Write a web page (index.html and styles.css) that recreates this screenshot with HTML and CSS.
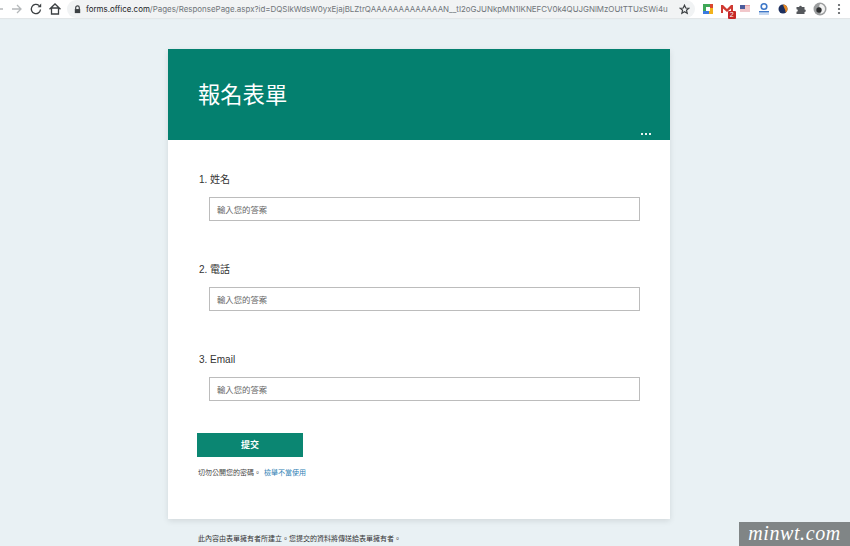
FILE: index.html
```html
<!DOCTYPE html>
<html lang="zh-Hant">
<head>
<meta charset="utf-8">
<title>報名表單</title>
<link rel="stylesheet" href="styles.css">
</head>
<body>
<header class="chrome">
  <nav class="nav">
    <svg class="nav-icon" viewBox="0 0 14 14"><path d="M12 7H3M7 3L3 7l4 4" class="stroke faint"/></svg>
    <svg class="nav-icon" viewBox="0 0 14 14"><path d="M2 7h9M7 3l4 4-4 4" class="stroke faint"/></svg>
    <svg class="nav-icon" viewBox="0 0 14 14"><path d="M11.500 7.500A4.600 4.600 0 1 1 10 3.600" class="stroke"/><path d="M8.600 5.200h3.600V1.600z" class="fill"/></svg>
    <svg class="nav-icon" viewBox="0 0 14 14"><path d="M1.500 7.200L7 2l5.500 5.200M3.500 6v6h7V6z" class="stroke"/></svg>
  </nav>
  <div class="omnibox">
    <svg class="lock" viewBox="0 0 10 10"><path d="M3 4.500V3a2 2 0 0 1 4 0v1.500" class="stroke"/><rect x="2" y="4.500" width="6" height="4.500" class="fill"/></svg>
    <span class="url"><span class="host">forms.office.com</span>/Pages/ResponsePage.aspx?id=DQSIkWdsW0yxEjajBLZtrQAAAAAAAAAAAAAN__tI2oGJUNkpMN1IKNEFCV0k4QUJGNlMzOUtTTUxSWi4u</span>
    <svg class="star" viewBox="0 0 12 12"><path d="M6 1.300l1.400 3.100 3.300.3-2.500 2.200.8 3.300L6 8.500l-2.900 1.700.8-3.300L1.300 4.700l3.300-.3z" class="stroke"/></svg>
  </div>
  <div class="extensions">
    <svg class="ext" viewBox="0 0 14 14"><rect x="2" y="2" width="10" height="10" fill="#f2b21c"/><path d="M2 2h7v3H5v4H2z" fill="#3fa757"/><path d="M2 9h6v3H2z" fill="#3a7be0"/><path d="M9 2h3v4H9z" fill="#d9452f"/><rect x="5" y="5" width="4" height="4" fill="#fff"/></svg>
    <span class="ext mail">
      <svg viewBox="0 0 14 14"><path d="M1 11V3h2l4 4 4-4h2v8h-2V6.500L7 10 3 6.500V11z" fill="#cf3a32"/></svg>
      <span class="badge">2</span>
    </span>
    <svg class="ext" viewBox="0 0 14 14"><rect x="2" y="3" width="10" height="7" fill="#e8a3a8"/><path d="M2 5h10M2 7h10M2 9h10" stroke="#fff" stroke-width=".8"/><rect x="2" y="3" width="5" height="4" fill="#4a5c9c"/></svg>
    <svg class="ext" viewBox="0 0 14 14"><circle cx="7" cy="4.500" r="2.800" fill="none" stroke="#3f78c8" stroke-width="1.600"/><path d="M2 9h10v1.500H2z" fill="#3f78c8"/><path d="M2 11.500h10v1H2z" fill="#8fb2e2"/></svg>
    <svg class="ext" viewBox="0 0 14 14"><circle cx="7" cy="7" r="4.500" fill="#1d2f5e"/><path d="M7 2.500A4.500 4.500 0 0 1 9.500 10.700C10 8 8 6 7 2.500z" fill="#e98a24"/></svg>
    <svg class="ext" viewBox="0 0 14 14"><path d="M2.500 5h2.700a1.300 1.300 0 0 1 2.600 0h2.700v2.400a1.300 1.300 0 0 1 0 2.600V12H2.500V9.800a1.300 1.300 0 0 0 0-2.600z" fill="#55585c"/></svg>
    <svg class="ext" viewBox="0 0 14 14"><circle cx="7" cy="7" r="6.500" fill="#9b9d9e"/><path d="M7 2a5 5 0 0 1 0 10c2-2 1-3.300 0-5-1-2-1-3.500 0-5z" fill="#f2f2f2"/><circle cx="6" cy="8" r="2.700" fill="#2d2f30"/></svg>
    <svg class="menu" viewBox="0 0 4 14"><circle cx="2" cy="3" r="1.100"/><circle cx="2" cy="7" r="1.100"/><circle cx="2" cy="11" r="1.100"/></svg>
  </div>
</header>

<main class="page">
  <section class="card">
    <div class="banner">
      <h1 class="title">報名表單</h1>
      <div class="dots"><i></i><i></i><i></i></div>
    </div>
    <form class="form">
      <div class="questions">
        <div class="question">
          <label class="label">1. 姓名</label>
          <div class="input">輸入您的答案</div>
        </div>
        <div class="question">
          <label class="label">2. 電話</label>
          <div class="input">輸入您的答案</div>
        </div>
        <div class="question">
          <label class="label">3. Email</label>
          <div class="input">輸入您的答案</div>
        </div>
      </div>
      <div class="submit">提交</div>
      <p class="note">切勿公開您的密碼。<a class="link">檢舉不當使用</a></p>
    </form>
  </section>
  <p class="footer">此內容由表單擁有者所建立。您提交的資料將傳送給表單擁有者。</p>
</main>

<div class="watermark">minwt.com</div>
</body>
</html>
```
FILE: styles.css
```css
* { box-sizing: border-box; }
html, body { margin: 0; height: 100%; }
body {
  width: 850px;
  height: 546px;
  overflow: hidden;
  position: relative;
  background: #e9f1f4;
  font-family: "Liberation Sans", "Noto Sans CJK TC", sans-serif;
  color: #333;
}
.chrome {
  height: 18px;
  background: #fff;
  display: flex;
  align-items: center;
  box-shadow: 0 1px 1px #e2e6e8;
}
.nav { display: flex; gap: 5px; width: 64px; margin-left: -9px; flex: none; }
.nav-icon { width: 14px; height: 14px; flex: none; }
.stroke { fill: none; stroke: #3c4043; stroke-width: 1.300; }
.stroke.faint { stroke: #b5b8ba; }
.fill { fill: #3c4043; stroke: none; }
.omnibox {
  width: 628px;
  margin-left: 12px;
  flex: none;
  height: 18px;
  background: #f1f3f4;
  border-radius: 9px;
  display: flex;
  align-items: center;
  padding-left: 6px;
}
.lock { width: 9px; height: 9px; flex: none; }
.url {
  margin-left: 4px;
  width: 582px;
  flex: none;
  white-space: nowrap;
  font-family: "Inter", sans-serif;
  font-size: 7.930px;
  color: #70757a;
}
.host { color: #202124; }
.star { width: 11px; height: 11px; margin-left: 10.500px; flex: none; }
.extensions { display: flex; align-items: center; gap: 4.700px; margin-left: 6px; }
.ext { width: 14px; height: 14px; flex: none; display: block; }
.mail { position: relative; }
.mail svg { width: 14px; height: 14px; display: block; }
.badge {
  position: absolute;
  right: -2px;
  bottom: -3px;
  width: 8px;
  height: 8px;
  background: #c62828;
  color: #fff;
  font-size: 7px;
  line-height: 8px;
  text-align: center;
  border-radius: 1px;
}
.menu { width: 4px; height: 14px; margin-left: 5.300px; fill: #55585c; flex: none; }

.page { width: 501.500px; margin: 31px 0 0 168px; }
.card { background: #fff; box-shadow: 0 2px 6px rgba(0,0,0,.1); height: 470px; }
.banner { height: 91px; background: #04806f; position: relative; padding: 31px 30px 0; }
.title { margin: 0; font-size: 22.300px; line-height: 32px; font-weight: 400; color: #fff; }
.dots { position: absolute; right: 19px; bottom: 5px; display: flex; gap: 2px; }
.dots i { width: 2px; height: 2px; background: #e8f3f1; display: block; }
.form { padding: 32px 29px 0; }
.questions { display: flex; flex-direction: column; gap: 41px; margin-bottom: 32px; }
.label { display: block; font-size: 10px; line-height: 16px; color: #333; padding-left: 2px; }
.input {
  margin: 9px 0 0 12px;
  width: 431px;
  height: 24px;
  border: 1px solid #bcbcbc;
  background: #fff;
  font-size: 8.400px;
  line-height: 24px;
  padding-left: 7px;
  color: #666;
}
.submit {
  width: 106px;
  height: 24px;
  background: #0b8672;
  color: #fff;
  font-size: 9px;
  font-weight: 700;
  line-height: 24px;
  text-align: center;
}
.note { margin: 10px 0 0; padding-left: 1px; font-size: 7px; line-height: 12px; color: #444; }
.link { color: #2f7fb5; margin-left: 3px; }
.footer { margin: 15px 0 0 30px; font-size: 7px; line-height: 10px; color: #333; }
.watermark {
  position: absolute;
  right: 0;
  bottom: 0;
  width: 111px;
  height: 24px;
  background: #808586;
  color: #fff;
  font-family: "Liberation Serif", serif;
  font-style: italic;
  font-size: 20px;
  letter-spacing: .6px;
  line-height: 22px;
  text-align: center;
}
```
